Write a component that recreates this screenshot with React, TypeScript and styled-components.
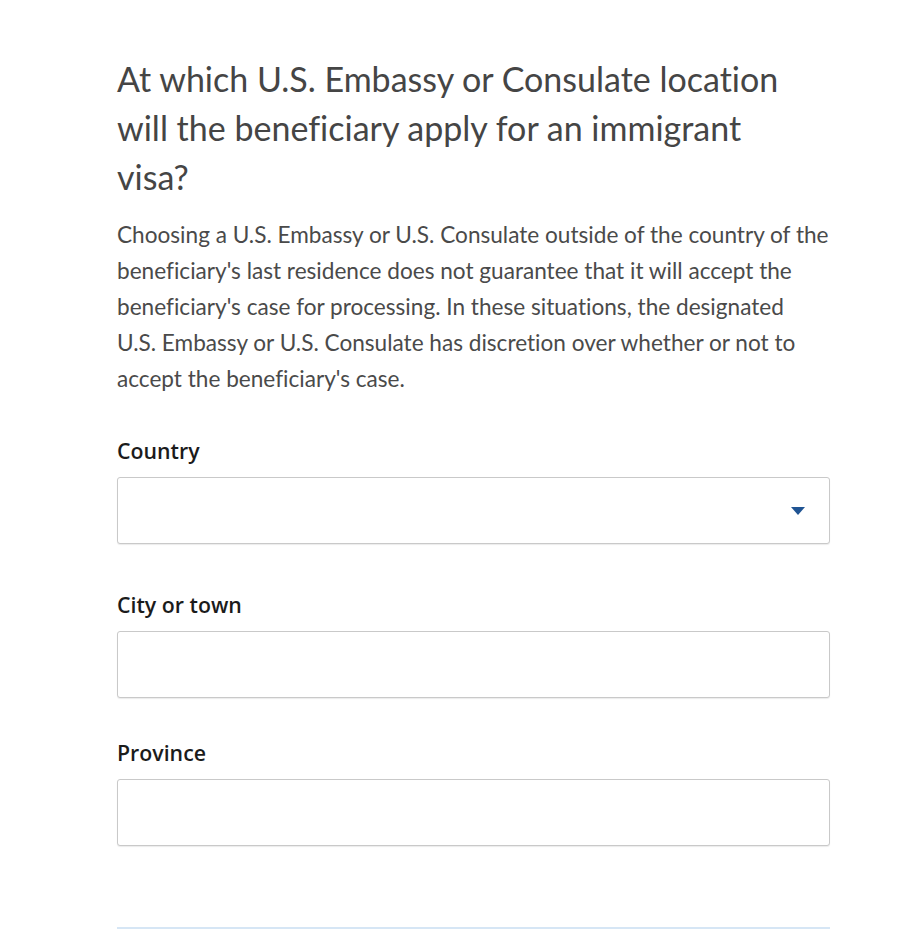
import React from 'react';
import styled, { createGlobalStyle } from 'styled-components';

const GlobalStyle = createGlobalStyle`
  html, body {
    margin: 0;
    padding: 0;
    background: #ffffff;
  }
`;

const Page = styled.main`
  width: 713px;
  padding: 54px 0 0 117px;
  display: flex;
  flex-direction: column;
`;

const Heading = styled.h1`
  margin: 0;
  max-width: 690px;
  font-family: Lato, 'Open Sans', sans-serif;
  font-size: 34px;
  font-weight: 400;
  line-height: 49px;
  color: #454545;
  font-variant-ligatures: none;
`;

const Intro = styled.p`
  margin: 16px 0 0;
  font-family: Lato, 'Open Sans', sans-serif;
  font-size: 22.6px;
  line-height: 36px;
  color: #4a4a4a;
  font-variant-ligatures: none;
`;

const Field = styled.div<{ space: number }>`
  display: flex;
  flex-direction: column;
  gap: 13px;
  margin-top: ${({ space }) => space}px;
`;

const Label = styled.label`
  font-family: 'Open Sans', sans-serif;
  font-size: 21.3px;
  font-weight: 600;
  line-height: 26px;
  color: #1b1b1b;
`;

const Box = styled.div`
  position: relative;
  height: 67px;
  box-sizing: border-box;
  border: 1px solid #c9c9c9;
  border-radius: 3px;
  box-shadow: 0 1px 1px rgba(0, 0, 0, 0.08);
  background: #ffffff;
`;

const TextInput = styled.input`
  width: 100%;
  height: 100%;
  box-sizing: border-box;
  border: 0;
  padding: 0 16px;
  background: transparent;
  font-family: 'Open Sans', sans-serif;
  font-size: 18px;
  outline: none;
`;

const Caret = styled.svg`
  position: absolute;
  right: 24px;
  top: 29px;
`;

const Divider = styled.hr`
  margin: 81px 0 0;
  border: 0;
  height: 2px;
  background: #d6e6f5;
`;

interface FieldProps {
  id: string;
  label: string;
  space: number;
  select?: boolean;
}

const TextField: React.FC<FieldProps> = ({ id, label, space, select }) => (
  <Field space={space}>
    <Label htmlFor={id}>{label}</Label>
    <Box>
      <TextInput id={id} type="text" readOnly={select} />
      {select && (
        <Caret width="14" height="8" viewBox="0 0 14 8">
          <path d="M0 0h14L7 8z" fill="#205493" />
        </Caret>
      )}
    </Box>
  </Field>
);

const intro =
  "Choosing a U.S. Embassy or U.S. Consulate outside of the country of the beneficiary's last " +
  "residence does not guarantee that it will accept the beneficiary's case for processing. In " +
  'these situations, the designated U.S.\u00a0Embassy or U.S. Consulate has discretion over ' +
  "whether or not to accept the beneficiary's case.";

export default function App() {
  return (
    <>
      <GlobalStyle />
      <Page>
        <Heading>
          At which U.S. Embassy or Consulate location will the beneficiary apply for an immigrant visa?
        </Heading>
        <Intro>{intro}</Intro>
        <TextField id="country" label="Country" space={41} select />
        <TextField id="city" label="City or town" space={48} />
        <TextField id="province" label="Province" space={42} />
        <Divider />
      </Page>
    </>
  );
}
